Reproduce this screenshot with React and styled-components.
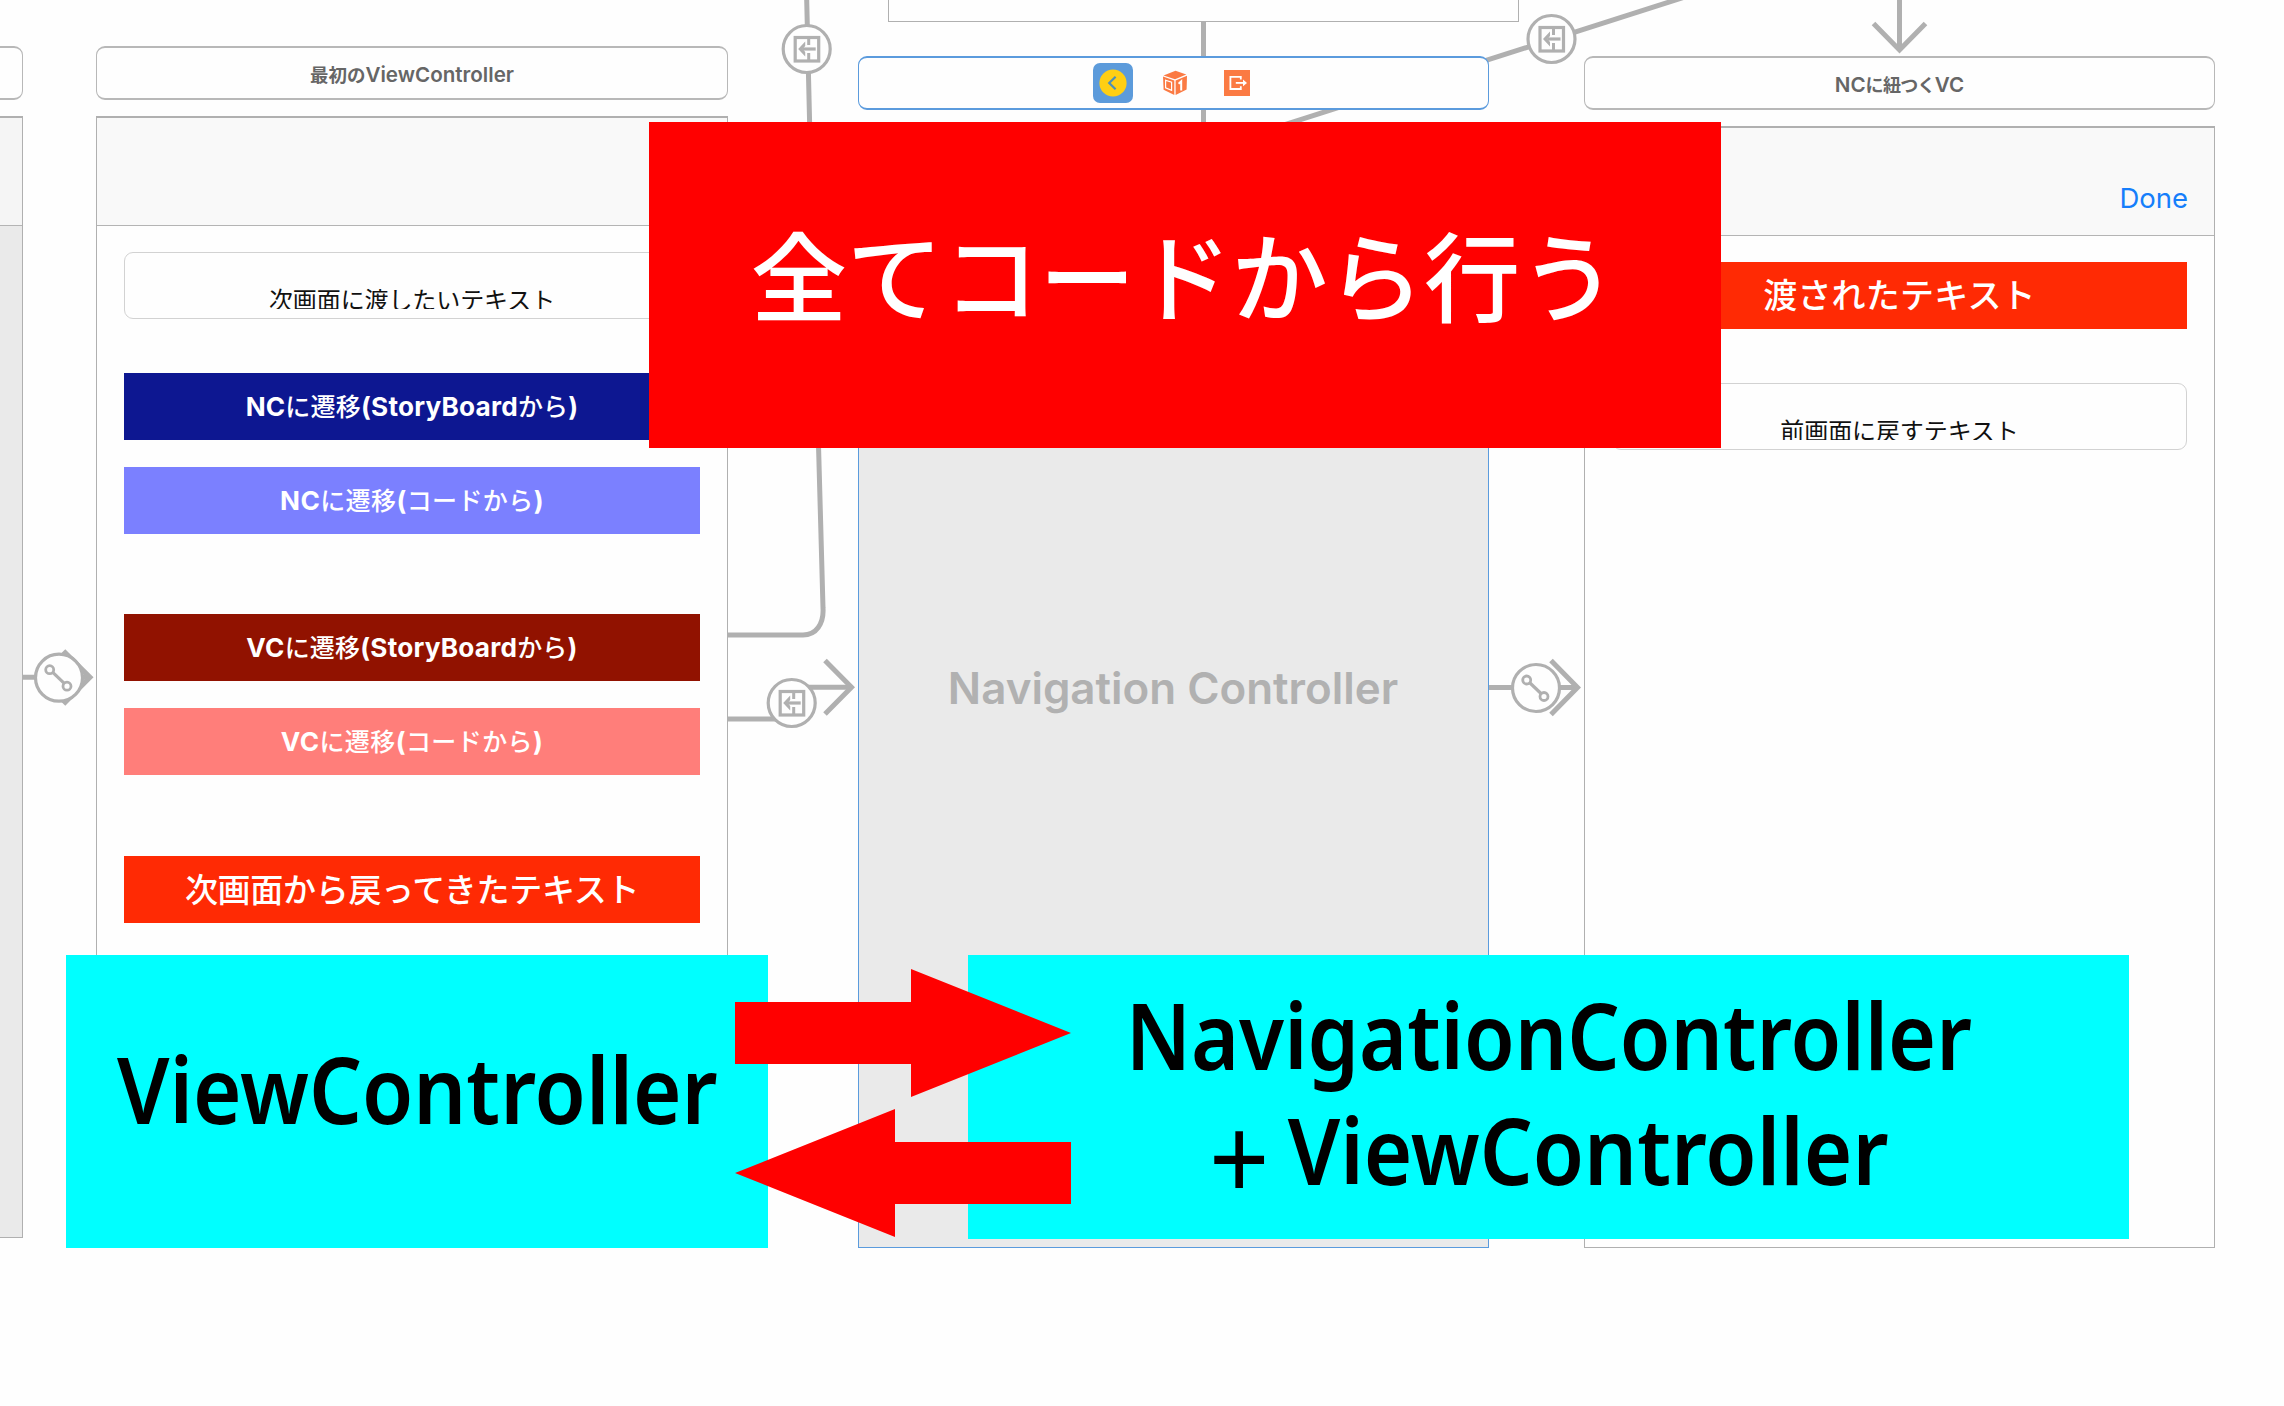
import React from 'react';
import styled, { createGlobalStyle } from 'styled-components';

const LINE = '#b0b0b0';
const BLUE = '#5b9bdd';

const GlobalStyle = createGlobalStyle`
  * { box-sizing: border-box; }
  body { margin: 0; background: #fefefe; }
`;

const Canvas = styled.main`
  position: relative;
  width: 2284px;
  height: 1406px;
  overflow: hidden;
  background: #fefefe;
  font-family: Inter, "Noto Sans CJK JP", sans-serif;
`;

const Connectors = styled.svg`
  position: absolute;
  inset: 0;
`;

const Scene = styled.section`
  position: absolute;
  left: ${(p) => p.$x}px;
  top: ${(p) => p.$y}px;
  width: ${(p) => p.$w || 631}px;
  display: flex;
  flex-direction: column;
  gap: 16px;
`;

const Dock = styled.header`
  height: 54px;
  display: flex;
  align-items: center;
  justify-content: center;
  gap: 22px;
  padding: ${(p) => (p.$selected ? '0 0 0 3px' : '4px 0 0')};
  border: solid ${(p) => (p.$selected ? BLUE : '#b8b8b8')};
  border-width: 2px 1px;
  border-radius: 9px;
  background: #fefefe;
`;

const DockTitle = styled.span`
  color: #666;
  font-size: 20.6px;
  font-weight: 600;
  line-height: 24px;
  white-space: nowrap;
`;

const DockItem = styled.div`
  width: 40px;
  height: 40px;
  display: grid;
  place-items: center;
  border-radius: 7px;
  background: ${(p) => (p.$selected ? '#5c9bdb' : 'transparent')};
`;

const Panel = styled.div`
  height: 1122px;
  display: flex;
  flex-direction: column;
  border: 1px solid ${(p) => (p.$selected ? BLUE : LINE)};
  border-top-width: 2px;
  background: ${(p) => (p.$grey ? '#eaeaea' : '#fefefe')};
`;

const NavBar = styled.div`
  height: 108px;
  flex: none;
  display: flex;
  align-items: flex-end;
  justify-content: flex-end;
  padding: 0 26px 21px 0;
  border-bottom: 1px solid #b4b4b4;
  background: ${(p) => (p.$dim ? '#f5f5f5' : '#f9f9f9')};
`;

const BarButton = styled.span`
  color: #157efb;
  font-size: 27.5px;
  line-height: 32px;
`;

const Content = styled.div`
  display: flex;
  flex-direction: column;
  padding: 26px 27px 0;
`;

const Field = styled.div`
  height: 67px;
  margin-top: ${(p) => p.$gap || 0}px;
  border: 1px solid #d2d2d2;
  border-radius: 9px;
  background: #fefefe;
`;

const FieldText = styled.div`
  height: 56px;
  overflow: hidden;
  padding-top: 36px;
  color: #111;
  font-size: 24px;
  line-height: 24px;
  letter-spacing: -0.1px;
  text-align: center;
  white-space: nowrap;
`;

const Button = styled.div`
  height: 67px;
  margin-top: ${(p) => p.$gap}px;
  padding-top: 19px;
  background: ${(p) => p.$color};
  color: #fff;
  font-size: 26.2px;
  font-weight: 700;
  line-height: 30px;
  letter-spacing: ${(p) => p.$spacing}px;
  text-align: center;
  white-space: nowrap;
`;

const Label = styled.div`
  height: 67px;
  margin-top: ${(p) => p.$gap || 0}px;
  display: flex;
  align-items: center;
  justify-content: center;
  background: #ff2a04;
  color: #fff;
  font-size: ${(p) => p.$size}px;
  font-weight: 500;
  line-height: 36px;
  letter-spacing: ${(p) => p.$spacing}px;
  white-space: nowrap;
`;

const Kana = styled.span`
  font-size: ${(p) => p.$size || 25}px;
  font-weight: ${(p) => p.$weight || 500};
  letter-spacing: ${(p) => (p.$tight ? '-0.7px' : 'inherit')};
`;

const ControllerName = styled.div`
  flex: 1;
  display: grid;
  place-items: center;
  padding-right: 1px;
  color: #b1b1b1;
  font-size: 43.9px;
  font-weight: 600;
  white-space: nowrap;
`;

const UpperScene = styled.div`
  position: absolute;
  left: 888px;
  top: -20px;
  width: 631px;
  height: 42px;
  border: 1px solid ${LINE};
  background: #fefefe;
`;

const RedBanner = styled.div`
  position: absolute;
  left: 649px;
  top: 122px;
  width: 1072px;
  height: 326px;
  display: flex;
  align-items: center;
  justify-content: center;
  padding: 0 3px 13px 0;
  background: #f00;
  color: #fff;
  font-size: 96.2px;
  font-weight: 500;
  line-height: 110px;
  white-space: nowrap;
`;

const Caption = styled.div`
  position: absolute;
  left: ${(p) => p.$x}px;
  top: 955px;
  width: ${(p) => p.$w}px;
  height: ${(p) => p.$h}px;
  display: flex;
  flex-direction: column;
  align-items: center;
  justify-content: center;
  padding-bottom: ${(p) => p.$lift}px;
  background: #0ff;
  color: #000;
  font-family: "Noto Sans", sans-serif;
  font-size: 92px;
  font-weight: 600;
  line-height: 115px;
  white-space: nowrap;
`;

const CaptionLine = styled.div`
  height: 115px;
  display: flex;
  gap: 20px;
  transform: scaleX(${(p) => p.$stretch});
`;

const Plus = styled.span`
  padding-top: 6px;
  font-size: 117px;
  font-weight: 400;
  line-height: 115px;
`;

const Arrows = styled.svg`
  position: absolute;
  left: 735px;
  top: 969px;
`;

function SegueBadge({ x, y, kind }) {
  return (
    <g transform={`translate(${x} ${y})`} fill="none" stroke={LINE}>
      <circle r="23.5" fill="#fefefe" strokeWidth="3.2" />
      {kind === 'show' ? (
        <g>
          <rect x="-11.5" y="-11.5" width="23.5" height="23.5" strokeWidth="3.2" />
          <path d="M2 -11V-4M2 4V11" strokeWidth="3" />
          <path d="M-4 0H9" strokeWidth="3.2" />
          <path d="M-8.5 0L-1.5 -7.5V-3L-4 0L-1.5 3V7.5Z" fill={LINE} stroke="none" />
        </g>
      ) : (
        <g strokeWidth="2.8">
          <path d="M-6.5 -5.5L5 5.5" strokeWidth="3.2" />
          <circle cx="-9.3" cy="-8" r="4" />
          <circle cx="8" cy="8.5" r="4" />
        </g>
      )}
    </g>
  );
}

function NavControllerIcon() {
  return (
    <svg width="28" height="28" viewBox="0 0 28 28">
      <circle cx="14" cy="14" r="13.6" fill="#ffcf14" />
      <path d="M16.6 7.8L10.2 14L16.6 20.2" fill="none" stroke="#4d8fbb" strokeWidth="2.2" />
    </svg>
  );
}

function FirstResponderIcon() {
  return (
    <svg width="26" height="26" viewBox="0 0 26 26">
      <g fill="#fb7a43">
        <path d="M13.5 0.8L24.3 4.6L13 9.3L1.5 5.4Z" />
        <path d="M1 6.5L12.3 10.4V25L1.6 19.8Z" />
        <path d="M13.6 10.4L25 5.8L24.6 19.6L13.6 25Z" />
      </g>
      <path d="M3.6 10.2L9.6 12.3V20.4L3.6 17.8Z" fill="none" stroke="#fff" strokeWidth="1.2" />
      <path d="M16.6 13.8L19.2 11.4V20.4" fill="none" stroke="#fff" strokeWidth="2" />
    </svg>
  );
}

function ExitIcon() {
  return (
    <svg width="26" height="26" viewBox="0 0 26 26">
      <rect width="26" height="26" fill="#fb7a43" />
      <path d="M16.8 9.6V6.8H6.4V19H16.8V16.2" fill="none" stroke="#fff" strokeWidth="1.8" />
      <path d="M11.8 12.9H20" stroke="#fff" strokeWidth="1.8" />
      <path d="M19 9.6L23 12.9L19 16.2Z" fill="#fff" />
    </svg>
  );
}

export default function App() {
  return (
    <Canvas>
      <GlobalStyle />
      <Connectors width="2284" height="1406" fill="none" stroke={LINE} strokeWidth="5">
        <path d="M1203.5 22V130" />
        <path d="M1268 130L1688 -4" />
        <path d="M806.7 0L809.6 122L823 608C824 624 816 635 803 635H727" />
        <path d="M727 719H780M806 687.3H851" />
        <path d="M825 660.5L851.5 687.3L825 714" />
        <path d="M23 677.3H89" />
        <path d="M63.5 651L90 677.3L63.5 704" />
        <path d="M1488 687.5H1577" />
        <path d="M1551 660.5L1577.5 687.5L1551 714.5" />
        <path d="M1899.5 0V50" />
        <path d="M1873.5 23.5L1899.5 50L1925.5 23.5" />
        <SegueBadge x={806.7} y={49} kind="show" />
        <SegueBadge x={1551.5} y={39} kind="show" />
        <SegueBadge x={791.7} y={703} kind="show" />
        <SegueBadge x={59} y={677.7} kind="root" />
        <SegueBadge x={1536} y={688} kind="root" />
      </Connectors>

      <UpperScene />

      <Scene $x={-608} $y={46}>
        <Dock />
        <Panel $grey>
          <NavBar $dim />
        </Panel>
      </Scene>

      <Scene $x={96} $y={46} $w={632}>
        <Dock>
          <DockTitle><Kana $size={18.5} $weight={600}>最初の</Kana>ViewController</DockTitle>
        </Dock>
        <Panel>
          <NavBar />
          <Content>
            <Field><FieldText>次画面に渡したいテキスト</FieldText></Field>
            <Button $gap={54} $color="#0d1791" $spacing={0.2}>
              NC<Kana>に遷移</Kana>(StoryBoard<Kana>から</Kana>)
            </Button>
            <Button $gap={27} $color="#7b80ff" $spacing={0.4}>
              NC<Kana>に遷移</Kana>(<Kana>コードから</Kana>)
            </Button>
            <Button $gap={80} $color="#911200" $spacing={0.2}>
              VC<Kana>に遷移</Kana>(StoryBoard<Kana>から</Kana>)
            </Button>
            <Button $gap={27} $color="#ff7e7a" $spacing={0.4}>
              VC<Kana>に遷移</Kana>(<Kana>コードから</Kana>)
            </Button>
            <Label $gap={81} $size={33} $spacing={-0.3}>次画面から戻ってきたテキスト</Label>
          </Content>
        </Panel>
      </Scene>

      <Scene $x={858} $y={56}>
        <Dock $selected>
          <DockItem $selected><NavControllerIcon /></DockItem>
          <DockItem><FirstResponderIcon /></DockItem>
          <DockItem><ExitIcon /></DockItem>
        </Dock>
        <Panel $selected $grey>
          <ControllerName>Navigation Controller</ControllerName>
        </Panel>
      </Scene>

      <Scene $x={1584} $y={56}>
        <Dock>
          <DockTitle>NC<Kana $size={18} $weight={600} $tight>に紐つく</Kana>VC</DockTitle>
        </Dock>
        <Panel>
          <NavBar><BarButton>Done</BarButton></NavBar>
          <Content>
            <Label $size={34} $spacing={0.2}>渡されたテキスト</Label>
            <Field $gap={54}><FieldText>前画面に戻すテキスト</FieldText></Field>
          </Content>
        </Panel>
      </Scene>

      <RedBanner>全てコードから行う</RedBanner>

      <Caption $x={66} $w={702} $h={293} $lift={27}>
        <CaptionLine $stretch={0.904}>ViewController</CaptionLine>
      </Caption>
      <Caption $x={968} $w={1161} $h={284} $lift={10}>
        <CaptionLine $stretch={0.895}>NavigationController</CaptionLine>
        <CaptionLine $stretch={0.904}><Plus>+</Plus>ViewController</CaptionLine>
      </Caption>

      <Arrows width="337" height="268" fill="#f00">
        <path d="M0 33H176V0L336 64L176 128V95H0Z" />
        <path d="M336 173H160V140L0 204L160 268V235H336Z" />
      </Arrows>
    </Canvas>
  );
}
